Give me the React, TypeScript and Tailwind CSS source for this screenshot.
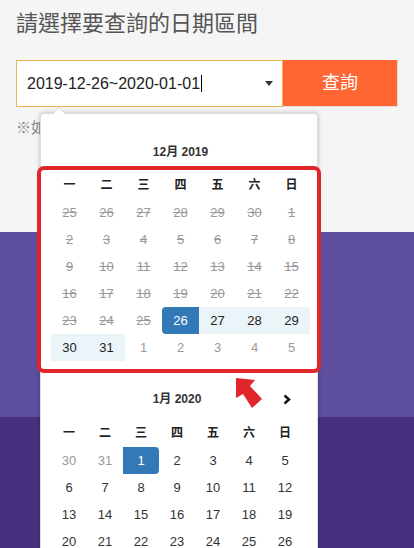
import React from "react";

type T = "dis" | "off" | "norm" | "start" | "end" | "range";
type Cell = { d: number; t: T };

const mk = (ds: number[], t: T): Cell[] => ds.map((d) => ({ d, t }));

const decRows: Cell[][] = [
  mk([25, 26, 27, 28, 29, 30, 1], "dis"),
  mk([2, 3, 4, 5, 6, 7, 8], "dis"),
  mk([9, 10, 11, 12, 13, 14, 15], "dis"),
  mk([16, 17, 18, 19, 20, 21, 22], "dis"),
  [...mk([23, 24, 25], "dis"), { d: 26, t: "start" }, ...mk([27, 28, 29], "range")],
  [...mk([30, 31], "range"), ...mk([1, 2, 3, 4, 5], "off")],
];

const janRows: Cell[][] = [
  [...mk([30, 31], "off"), { d: 1, t: "end" }, ...mk([2, 3, 4, 5], "norm")],
  mk([6, 7, 8, 9, 10, 11, 12], "norm"),
  mk([13, 14, 15, 16, 17, 18, 19], "norm"),
  mk([20, 21, 22, 23, 24, 25, 26], "norm"),
  [...mk([27, 28, 29, 30, 31], "norm"), ...mk([1, 2], "off")],
];

const cellCls: Record<T, string> = {
  dis: "text-[#999] line-through",
  off: "text-[#999]",
  norm: "text-[#333]",
  start: "bg-[#3479b7] text-white rounded-l-[4px]",
  end: "bg-[#3479b7] text-white rounded-r-[4px]",
  range: "bg-[#ebf4f8] text-[#222]",
};

const weekdays = ["一", "二", "三", "四", "五", "六", "日"];

function Month({
  title,
  rows,
  gridCls,
  next,
  headMb,
}: {
  title: string;
  rows: Cell[][];
  gridCls: string;
  next?: boolean;
  headMb: string;
}) {
  return (
    <div>
      <div className={`${gridCls} h-[27px] ${headMb}`}>
        <div className="col-start-2 col-span-5 text-center text-[12px] leading-[27px] font-bold text-[#333]">
          {title}
        </div>
        {next && (
          <div className="col-start-7 flex items-center justify-center pl-[3px]">
            <svg width="8" height="11" viewBox="0 0 8 11">
              <path d="M1.5 1.5 L6 5.5 L1.5 9.5" fill="none" stroke="#111" strokeWidth="2.4" />
            </svg>
          </div>
        )}
      </div>
      <div className={gridCls}>
        {weekdays.map((w) => (
          <div key={w} className="h-[27px] leading-[27px] text-center text-[12px] font-bold text-[#222]">
            {w}
          </div>
        ))}
        {rows.flat().map((c, i) => (
          <div key={i} className={`h-[27px] leading-[27px] text-center text-[13px] ${cellCls[c.t]}`}>
            {c.d}
          </div>
        ))}
      </div>
    </div>
  );
}

export default function App() {
  return (
    <div className="relative w-[414px] h-[548px] overflow-hidden flex flex-col font-['Liberation_Sans','Noto_Sans_CJK_TC',sans-serif]">
      <div className="h-[232px] bg-[#f5f5f5] px-4 pt-[9px] shrink-0">
        <h1 className="text-[22px] leading-[30px] text-[#555]">請選擇要查詢的日期區間</h1>
        <div className="mt-[21px] flex h-[47px]">
          <div className="flex-1 flex items-center bg-white border border-[#e9b65c] pl-[10px] pr-[9px]">
            <span className="text-[16px] text-[#222]">2019-12-26~2020-01-01</span>
            <span className="w-px h-[17px] bg-black ml-px" />
            <span className="ml-auto w-0 h-0 border-x-[4px] border-x-transparent border-t-[5px] border-t-[#333]" />
          </div>
          <button className="w-[115px] bg-[#ff6633] text-white text-[18px] border-r border-b border-[#e0dcd8]">
            查詢
          </button>
        </div>
        <p className="mt-[11px] text-[15px] leading-[20px] text-[#888]">※如有疑問請洽客服</p>
      </div>
      <div className="h-[185px] bg-[#5e4f9f] shrink-0" />
      <div className="flex-1 bg-[#46317f]" />

      <div className="absolute left-[40px] top-[113px] w-[278px] h-[460px] bg-white border border-[#ddd] rounded-[4px] shadow-[0_0_4px_rgba(0,0,0,0.25)] pt-[25px] pl-[10px]">
        <span className="absolute -top-[7px] left-[11px] w-0 h-0 border-x-[7px] border-x-transparent border-b-[7px] border-b-[#ccc]" />
        <span className="absolute -top-[6px] left-[12px] w-0 h-0 border-x-[6px] border-x-transparent border-b-[6px] border-b-white" />
        <Month title="12月 2019" rows={decRows} gridCls="grid grid-cols-[repeat(7,37px)]" headMb="mb-[6px]" />
        <div className="mt-[25px]">
          <Month title="1月 2020" rows={janRows} gridCls="grid grid-cols-[repeat(7,36px)]" next headMb="mb-[7px]" />
        </div>
      </div>

      <div className="absolute left-[37px] top-[166px] w-[284px] h-[207px] border-4 border-[#e1262b] rounded-[7px]" />

      <svg className="absolute left-[230px] top-[374px]" width="36" height="40" viewBox="0 0 36 40">
        <polygon points="6,4 25,6 20,12 32,25 22,34 13,20 6,24" fill="#e1262b" />
      </svg>
    </div>
  );
}
